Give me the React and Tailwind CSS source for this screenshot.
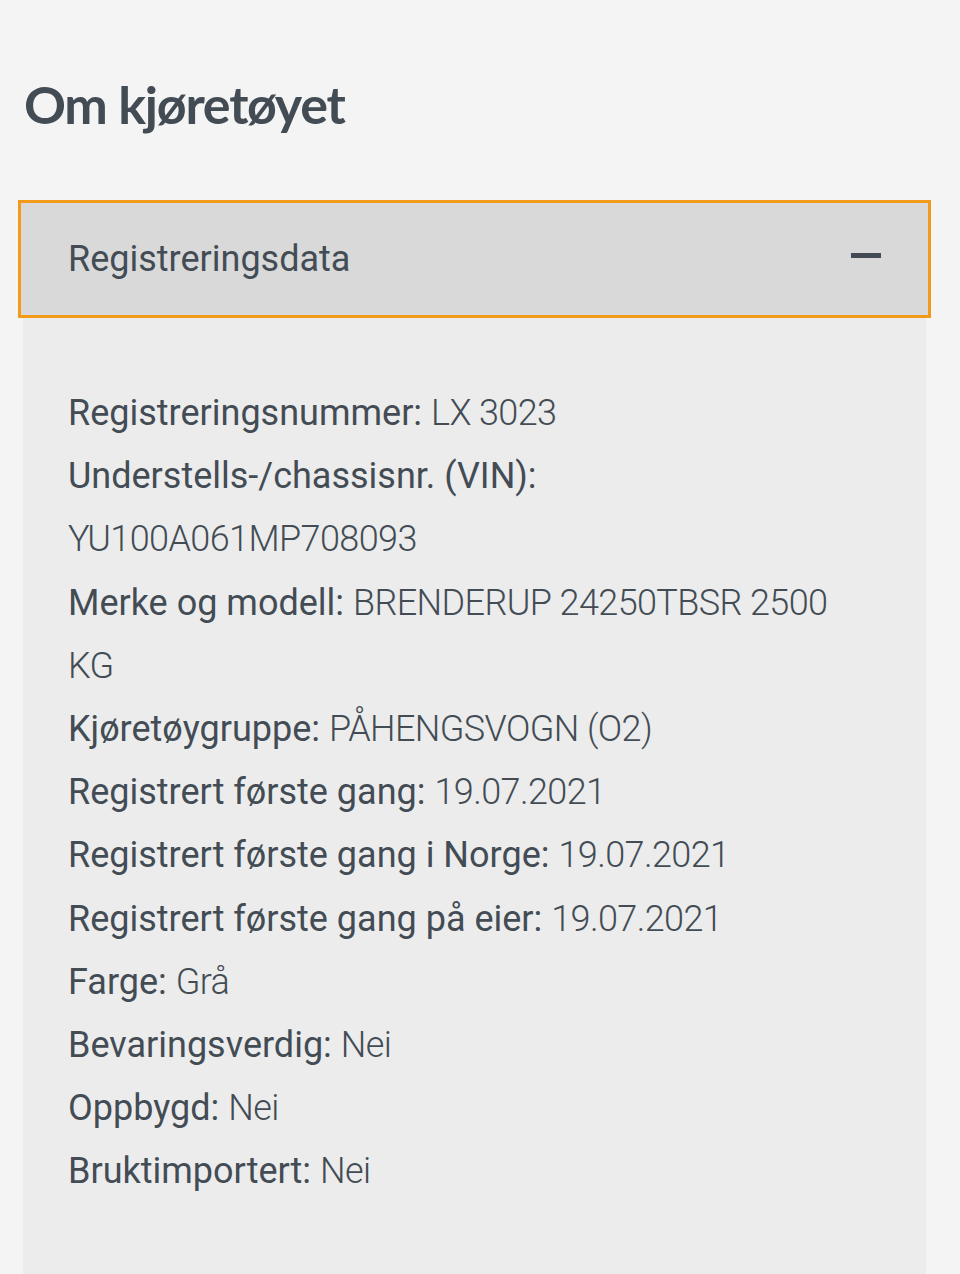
import React from 'react';

const rows = [
  { label: 'Registreringsnummer:', value: 'LX 3023' },
  { label: 'Understells-/chassisnr. (VIN):', value: 'YU100A061MP708093' },
  { label: 'Merke og modell:', value: 'BRENDERUP 24250TBSR 2500 KG' },
  { label: 'Kjøretøygruppe:', value: 'PÅHENGSVOGN (O2)' },
  { label: 'Registrert første gang:', value: '19.07.2021' },
  { label: 'Registrert første gang i Norge:', value: '19.07.2021' },
  { label: 'Registrert første gang på eier:', value: '19.07.2021' },
  { label: 'Farge:', value: 'Grå' },
  { label: 'Bevaringsverdig:', value: 'Nei' },
  { label: 'Oppbygd:', value: 'Nei' },
  { label: 'Bruktimportert:', value: 'Nei' },
];

const App = () => {
  return (
    <div className="min-h-screen bg-[#f4f4f4] text-[#434c55] font-['Roboto',sans-serif] overflow-hidden h-[1274px]">
      {/* Heading */}
      <h1 className="pl-6 pt-[72px] text-[52px] leading-[64px] font-bold font-['Lato',sans-serif] tracking-[-1.2px]">
        Om kjøretøyet
      </h1>

      {/* Accordion */}
      <div className="mt-[64px] px-[18px]">
        <button className="w-[913px] h-[118px] flex items-center justify-between border-[3px] border-[#f39a1b] bg-[#d9d9d9] pl-[47px] pr-[47px] text-left">
          <span className="text-[36px] font-normal">Registreringsdata</span>
          <span className="block w-[30px] h-[5px] bg-[#434c55] -translate-y-[4px]" />
        </button>
        <div className="ml-[5px] w-[903px] min-h-[960px] bg-[#ececec] pl-[45px] pr-[45px] pt-[64px] pb-[80px]">
          {rows.map((r) => (
            <p key={r.label} className="text-[36px] leading-[63.2px]">
              <span className="font-normal">{r.label}</span>{' '}
              <span className="font-light tracking-[-0.6px]">{r.value}</span>
            </p>
          ))}
        </div>
      </div>
    </div>
  );
};

export default App;
